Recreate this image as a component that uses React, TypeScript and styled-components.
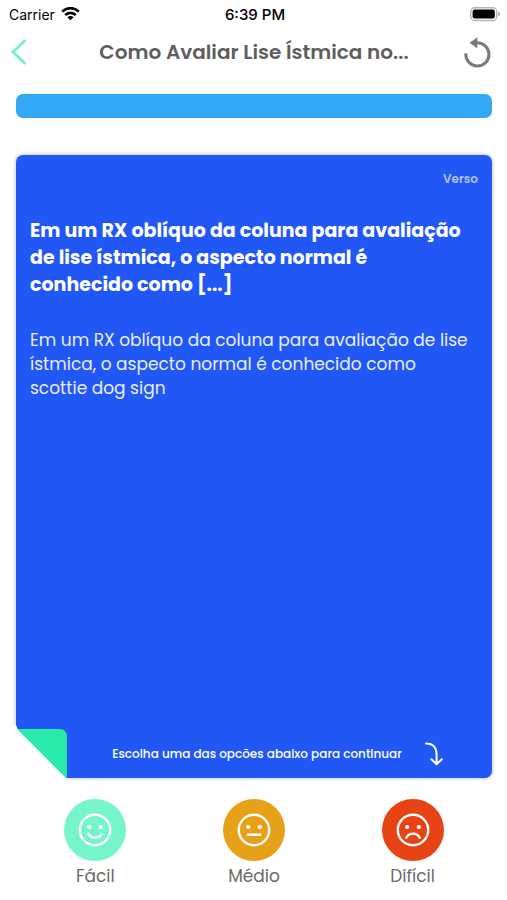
import { ReactNode } from 'react';
import styled, { createGlobalStyle } from 'styled-components';

const GlobalStyle = createGlobalStyle`
	* {
		box-sizing: border-box;
	}
	body {
		margin: 0;
		background-color: #fff;
		font-family: Poppins, Inter, 'Open Sans', sans-serif;
	}
	h1, h2, p {
		margin: 0;
	}
	svg {
		display: block;
	}
	button {
		padding: 0;
		border: 0;
		background: none;
		font-family: inherit;
		cursor: pointer;
	}
`;

const Screen = styled.div`
	display: flex;
	flex-direction: column;
	min-height: 100vh;
`;

const StatusBar = styled.div`
	display: grid;
	grid-template-columns: 1fr auto 1fr;
	align-items: center;
	height: 28px;
	padding: 0 6px 0 9px;
	color: #000;
	font-family: Inter, sans-serif;
	font-size: 14px;
`;

const Carrier = styled.div`
	display: flex;
	align-items: center;
	gap: 6px;
`;

const Clock = styled.time`
	font-size: 15px;
	font-weight: 500;
`;

const Battery = styled.div`
	display: flex;
	justify-content: flex-end;
`;

const Header = styled.header`
	display: grid;
	grid-template-columns: 36px 1fr 30px;
	align-items: center;
	height: 48px;
	padding: 0 15px 0 10px;
`;

const Title = styled.h1`
	color: #5e5e5e;
	font-size: 20px;
	font-weight: 600;
	line-height: 28px;
	text-align: center;
	white-space: nowrap;
`;

const Main = styled.main`
	flex: 1;
	display: flex;
	flex-direction: column;
	padding: 18px 15px 12px 16px;
`;

const Progress = styled.div`
	height: 24px;
	border-radius: 7px;
	overflow: hidden;
	background-color: #e4e4e4;
`;

const ProgressFill = styled.div`
	height: 100%;
	background-color: #32a8f6;
`;

const Card = styled.article`
	position: relative;
	flex: 1;
	display: flex;
	flex-direction: column;
	margin-top: 37px;
	padding: 14px 14px 12px;
	border-radius: 7px;
	background-color: #2158f5;
	box-shadow: 0 0 4px rgba(0, 0, 0, 0.3);
	color: #fff;
`;

const Side = styled.span`
	align-self: flex-end;
	color: #b4c1ee;
	font-size: 12px;
	font-weight: 600;
	line-height: 20px;
`;

const Question = styled.h2`
	margin-top: 28px;
	padding-right: 6px;
	font-size: 19px;
	font-weight: 700;
	line-height: 27px;
`;

const Answer = styled.p`
	margin-top: 30px;
	padding-right: 6px;
	color: #e9eeff;
	font-size: 17px;
	line-height: 24px;
`;

const Hint = styled.div`
	display: flex;
	align-items: center;
	justify-content: center;
	gap: 22px;
	margin-top: auto;
	padding-left: 48px;
	font-size: 12px;
	font-weight: 500;
	line-height: 20px;
`;

const Fold = styled.svg`
	position: absolute;
	left: -5px;
	bottom: -5px;
`;

const Options = styled.div`
	display: grid;
	grid-template-columns: repeat(3, 1fr);
	margin-top: 21px;
`;

const Option = styled.button`
	display: flex;
	flex-direction: column;
	align-items: center;
	gap: 3px;
	color: #6a6a6a;
	font-size: 17px;
	line-height: 24px;
`;

const Circle = styled.span<{ $color: string }>`
	display: grid;
	place-items: center;
	width: 62px;
	height: 62px;
	border-radius: 50%;
	background-color: ${({ $color }) => $color};
`;

const options = [
	{ label: 'Fácil', color: '#76f5cb', mouth: 'M11.3 21.8c2.6 5.4 10.8 5.4 13.4 0' },
	{ label: 'Médio', color: '#e6a118', mouth: 'M11.8 22.8h12.4' },
	{ label: 'Difícil', color: '#e84315', mouth: 'M11.3 25.8c2.6-5.6 10.8-5.6 13.4 0' },
];

function Face({ children }: { children: ReactNode }) {
	return (
		<svg width="36" height="36" viewBox="0 0 36 36" fill="none" stroke="#fff" strokeWidth="2.4" strokeLinecap="round">
			<circle cx="18" cy="18" r="15.2" />
			<circle cx="12.2" cy="15" r="2.1" fill="#fff" stroke="none" />
			<circle cx="23.8" cy="15" r="2.1" fill="#fff" stroke="none" />
			{children}
		</svg>
	);
}

export default function App() {
	const progress = 100;
	return (
		<Screen>
			<GlobalStyle />
			<StatusBar>
				<Carrier>
					<span>Carrier</span>
					<svg width="19" height="15" viewBox="0 0 19 15" fill="none" stroke="#000" strokeWidth="2.6">
						<path d="M1.2 4.6c4.7-4.6 11.9-4.6 16.6 0" />
						<path d="M4.2 8c3-2.9 7.6-2.9 10.6 0" />
						<path d="M9.5 13.2 6.4 10.2c1.7-1.6 4.5-1.6 6.2 0z" fill="#000" stroke="none" />
					</svg>
				</Carrier>
				<Clock>6:39 PM</Clock>
				<Battery>
					<svg width="31" height="15" viewBox="0 0 31 15">
						<rect x="0.7" y="0.7" width="26" height="12.8" rx="4" fill="#fff" stroke="#b5b5b5" strokeWidth="1.4" />
						<rect x="2.6" y="2.6" width="22.2" height="9" rx="2" fill="#000" />
						<path d="M28 4.6c2.8.8 2.8 4.2 0 5z" fill="#b5b5b5" />
					</svg>
				</Battery>
			</StatusBar>
			<Header>
				<button aria-label="Voltar">
					<svg width="18" height="28" viewBox="0 0 18 28" fill="none" stroke="#76f0c8" strokeWidth="3" strokeLinecap="round">
						<path d="M14.5 3 3 14l11.5 11" />
					</svg>
				</button>
				<Title>Como Avaliar Lise Ístmica no...</Title>
				<button aria-label="Reiniciar">
					<svg width="30" height="32" viewBox="0 0 30 32" fill="none">
						<path d="M3.8 18.5A11.6 11.6 0 1 0 15.2 6.8H12" stroke="#7a7a7a" strokeWidth="3" strokeLinecap="round" />
						<path d="M7.6 6.8 15.4 1.2v11.2z" fill="#7a7a7a" />
					</svg>
				</button>
			</Header>
			<Main>
				<Progress role="progressbar" aria-label="Progresso" aria-valuenow={progress}>
					<ProgressFill style={{ width: `${progress}%` }} />
				</Progress>
				<Card>
					<Side>Verso</Side>
					<Question>
						Em um RX oblíquo da coluna para avaliação de lise ístmica, o aspecto normal é conhecido como [...]
					</Question>
					<Answer>
						Em um RX oblíquo da coluna para avaliação de lise ístmica, o aspecto normal é conhecido como scottie dog sign
					</Answer>
					<Hint>
						<span>Escolha uma das opcões abaixo para continuar</span>
						<svg width="20" height="24" viewBox="0 0 20 24" fill="none" stroke="#fff" strokeWidth="2" strokeLinecap="round" strokeLinejoin="round">
							<path d="M2 1.5c7.5 0 10.8 4.5 10.6 11.5v9M7.4 17.2l5.2 5 5.2-5" />
						</svg>
					</Hint>
					<Fold width="58" height="58" viewBox="0 0 58 58">
						<path d="M0 0h5l1.8 4L56.4 54v4H0z" fill="#fff" />
						<path d="M6 4h43a7 7 0 0 1 7 7v43z" fill="#29eaa6" />
					</Fold>
				</Card>
				<Options>
					{options.map(({ label, color, mouth }) => (
						<Option key={label}>
							<Circle $color={color}>
								<Face>
									<path d={mouth} />
								</Face>
							</Circle>
							{label}
						</Option>
					))}
				</Options>
			</Main>
		</Screen>
	);
}
